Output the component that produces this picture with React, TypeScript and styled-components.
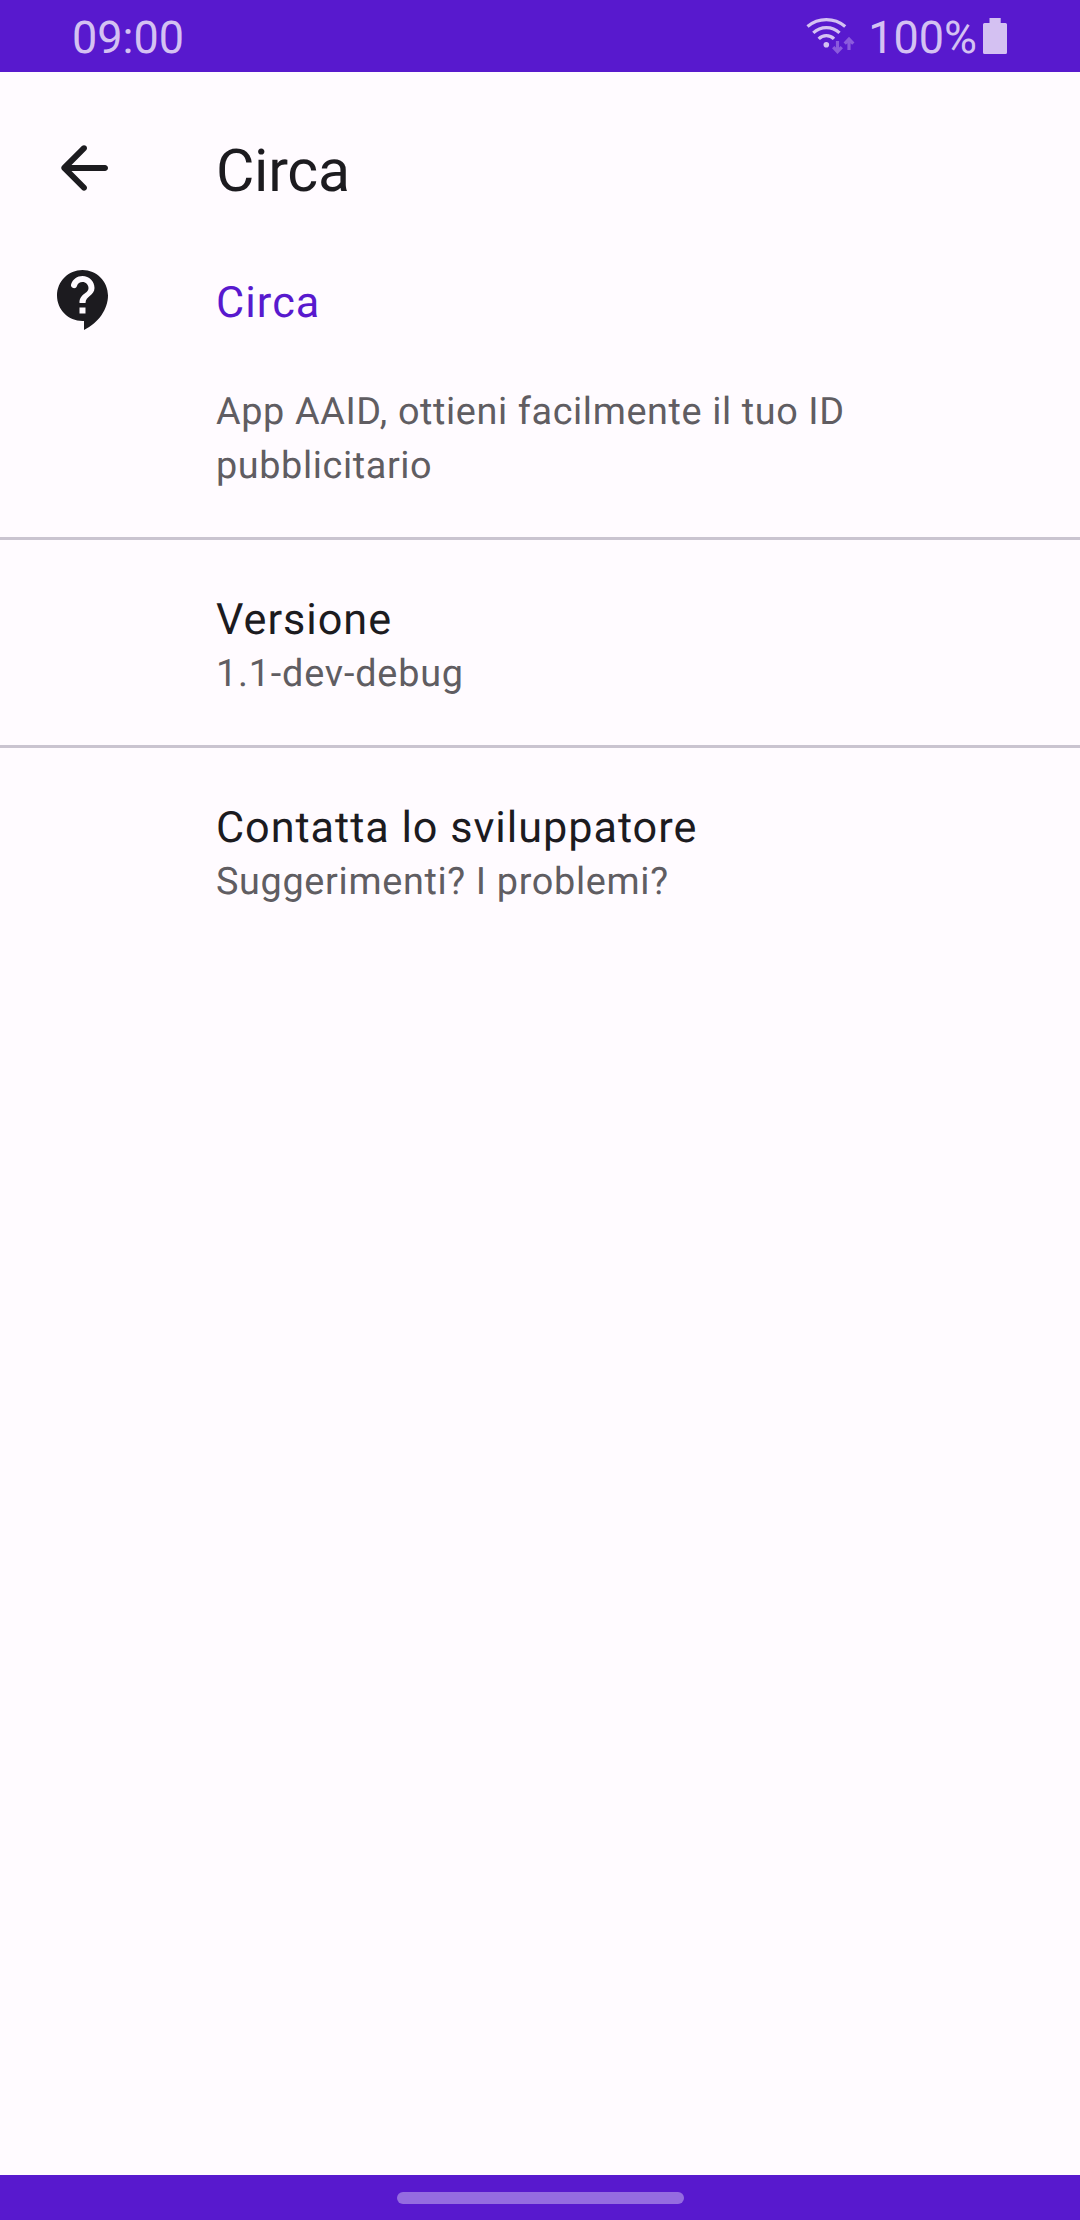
import React from "react";
import styled, { createGlobalStyle } from "styled-components";

const Global = createGlobalStyle`
  body {
    margin: 0;
    background: #fffbff;
    font-family: Roboto, "Noto Sans", sans-serif;
    text-rendering: geometricPrecision;
  }
`;

const Screen = styled.div`
  width: 1080px;
  height: 2220px;
  display: flex;
  flex-direction: column;
  background: #fffbff;
  overflow: hidden;
`;

const StatusBar = styled.header`
  height: 72px;
  box-sizing: border-box;
  padding: 0 73px 0 72px;
  display: flex;
  align-items: center;
  justify-content: space-between;
  background: #5819ce;
  color: #d4c1f2;
`;

const StatusText = styled.span`
  margin-top: 3px;
  font-size: 45px;
  line-height: 53px;
`;

const StatusIcons = styled.div`
  display: flex;
  align-items: center;
`;

const WifiIcon = styled.svg`
  width: 54px;
  height: 40px;
  margin-right: 10px;
`;

const BatteryIcon = styled.svg`
  width: 24px;
  height: 36px;
  margin-left: 6px;
`;

const AppBar = styled.div`
  height: 192px;
  box-sizing: border-box;
  padding-left: 48px;
  display: flex;
  align-items: center;
  color: #1c1b1f;
`;

const Icon = styled.svg`
  width: 72px;
  height: 72px;
  flex: none;
  fill: #1c1b1f;
`;

const ScreenTitle = styled.h1`
  margin: 8px 0 0 96px;
  font-size: 59px;
  font-weight: 400;
  line-height: 70px;
  letter-spacing: -0.3px;
`;

const List = styled.main`
  flex: 1;
`;

const SectionHeader = styled.div`
  height: 72px;
  padding-left: 48px;
  display: flex;
  align-items: center;
`;

const SectionTitle = styled.h2`
  margin: 5px 0 0 96px;
  font-size: 43.2px;
  font-weight: 400;
  line-height: 60px;
  letter-spacing: 1.1px;
  color: #5819ce;
`;

const Item = styled.section<{ $top: number }>`
  padding: ${(p) => p.$top}px 48px 44px 216px;
`;

const ItemTitle = styled.div`
  font-size: 43.2px;
  line-height: 54px;
  letter-spacing: 0.97px;
  color: #1c1b1f;
`;

const ItemText = styled.div<{ $tracking: number }>`
  max-width: 660px;
  font-size: 37.8px;
  line-height: 54px;
  letter-spacing: ${(p) => p.$tracking}px;
  color: #605d62;
`;

const Divider = styled.div`
  height: 3px;
  background: #cac4d0;
`;

const NavBar = styled.footer`
  height: 45px;
  display: flex;
  align-items: center;
  justify-content: center;
  background: #5819ce;
`;

const NavHandle = styled.div`
  width: 287px;
  height: 12px;
  border-radius: 6px;
  background: #956ce0;
`;

export default function App() {
  return (
    <Screen>
      <Global />
      <StatusBar>
        <StatusText>09:00</StatusText>
        <StatusIcons>
          <WifiIcon viewBox="0 0 54 40" fill="none" stroke="#d4c1f2">
            <path
              d="M3.500 10.500A29.300 29.300 0 0 1 41.200 10.500M9.300 16.900A19 19 0 0 1 35.500 16.900M14.700 22.800A10.600 10.600 0 0 1 30 22.800"
              strokeWidth="3.300"
            />
            <circle cx="22.300" cy="28.700" r="2.800" fill="#d4c1f2" stroke="none" />
            <path
              d="M33.500 25V35.500M29.200 31.200L33.500 35.700L37.800 31.200M45 34V23.500M40.700 27.600L45 23.100L49.300 27.600"
              stroke="#8b5bdd"
              strokeWidth="3.200"
            />
          </WifiIcon>
          <StatusText>100%</StatusText>
          <BatteryIcon viewBox="0 0 24 36" fill="#d4c1f2">
            <path d="M6.500 0H17.700V5H22.500Q24 5 24 6.500V34.500Q24 36 22.500 36H1.500Q0 36 0 34.500V6.500Q0 5 1.500 5H6.500Z" />
          </BatteryIcon>
        </StatusIcons>
      </StatusBar>
      <AppBar>
        <Icon viewBox="0 0 24 24" role="img" aria-label="Indietro">
          <path d="M19 11H7.830l4.880-4.880c.39-.39.39-1.030 0-1.420-.39-.39-1.020-.39-1.410 0l-6.590 6.590c-.39.39-.39 1.020 0 1.410l6.590 6.590c.39.39 1.020.39 1.410 0 .39-.39.39-1.020 0-1.410L7.830 13H19c.55 0 1-.45 1-1s-.45-1-1-1z" />
        </Icon>
        <ScreenTitle>Circa</ScreenTitle>
      </AppBar>
      <List>
        <SectionHeader>
          <Icon viewBox="0 0 24 24">
            <path
              d="M11.500 2C6.810 2 3 5.810 3 10.500S6.810 19 11.500 19h.5v3c4.860-2.340 8-7 8-11.500C20 5.810 16.190 2 11.500 2zM12.500 16.500h-2v-2h2zM12.500 13h-2c0-3.250 3-3 3-5 0-1.100-.9-2-2-2-.9 0-1.600.5-1.850 1.300-.15.450-.5.750-.950.750-.700 0-1.200-.650-1-1.300C8.250 5.100 9.700 4 11.500 4c2.210 0 4 1.790 4 4 0 2.500-3 2.750-3 5z"
              fillRule="evenodd"
            />
          </Icon>
          <SectionTitle>Circa</SectionTitle>
        </SectionHeader>
        <Item $top={49}>
          <ItemText $tracking={0.61}>App AAID, ottieni facilmente il tuo ID pubblicitario</ItemText>
        </Item>
        <Divider />
        <Item $top={53}>
          <ItemTitle>Versione</ItemTitle>
          <ItemText $tracking={0.8}>1.1-dev-debug</ItemText>
        </Item>
        <Divider />
        <Item $top={53}>
          <ItemTitle>Contatta lo sviluppatore</ItemTitle>
          <ItemText $tracking={0.66}>Suggerimenti? I problemi?</ItemText>
        </Item>
      </List>
      <NavBar>
        <NavHandle />
      </NavBar>
    </Screen>
  );
}
